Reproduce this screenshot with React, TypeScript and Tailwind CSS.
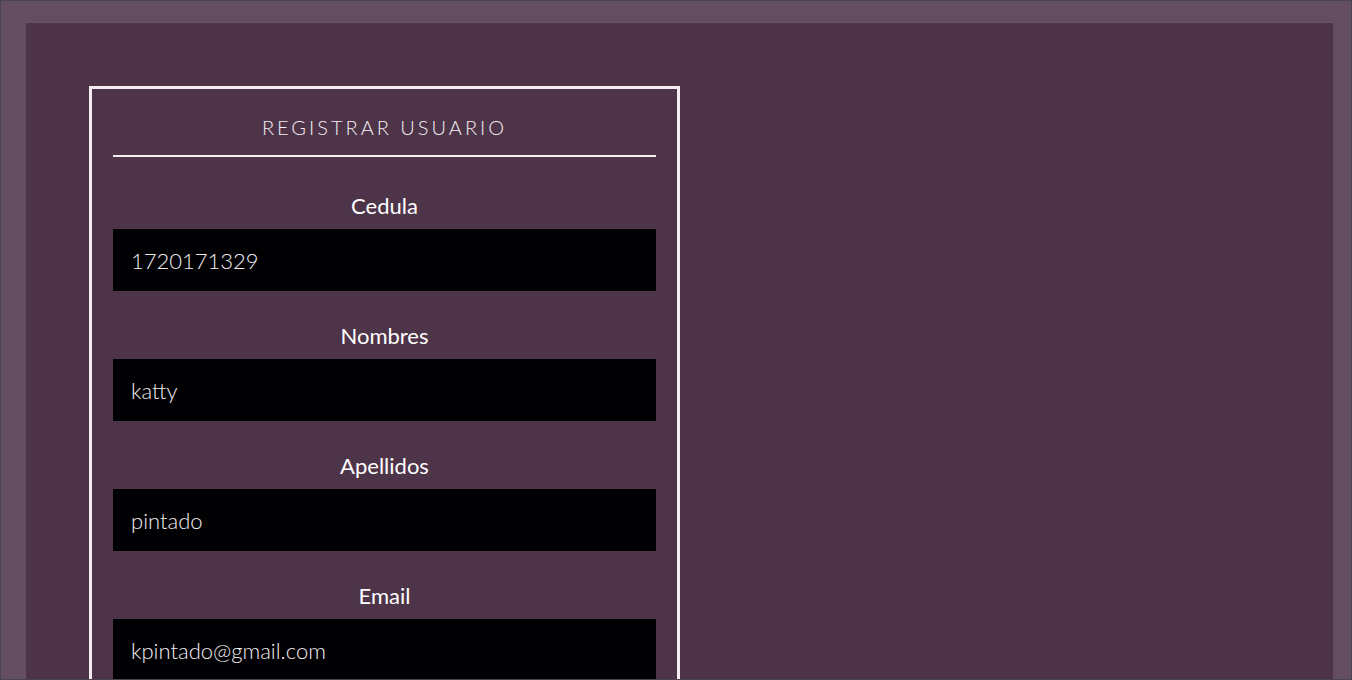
import React from "react";

const fields = [
  { label: "Cedula", value: "1720171329" },
  { label: "Nombres", value: "katty" },
  { label: "Apellidos", value: "pintado" },
  { label: "Email", value: "kpintado@gmail.com" },
];

const App = () => {
  return (
    <div className="h-[680px] w-[1352px] overflow-hidden border border-[#4a454a] bg-[#624e60] pl-[25px] pr-[18px] pt-[21px] font-['Lato','Liberation_Sans',sans-serif]">
      <div className="h-[700px] border-t border-[#6a5568] bg-[#4c3347] pl-[63px] pt-[63px]">
        <div className="w-[591px] border-[3px] border-[#f4eef3] bg-[#4e3449] px-[21px] pb-8 pt-[24px]">
          <h2 className="h-[28px] text-center text-[20px] font-light leading-[28px] tracking-[3px] text-[#f4eff3] box-content pb-[14px] border-b-2 border-[#f4eef3]">
            REGISTRAR USUARIO
          </h2>
          <div className="pt-[4px]">
            {fields.map((f) => (
              <div key={f.label}>
                <label className="mt-[32px] mb-[10px] block text-center text-[22px] font-normal leading-[26px] text-white">
                  {f.label}
                </label>
                <input
                  readOnly
                  value={f.value}
                  className="block h-[62px] w-full bg-[#010003] pl-[18px] text-[22px] font-light text-[#f2eef2] outline-none"
                />
              </div>
            ))}
          </div>
        </div>
      </div>
    </div>
  );
};

export default App;
